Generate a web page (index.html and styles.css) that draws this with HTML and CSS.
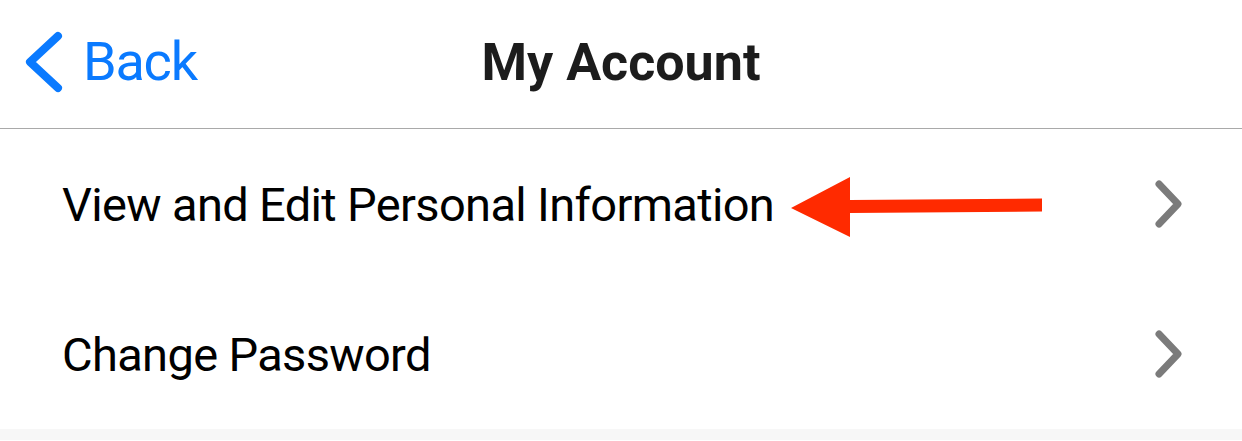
FILE: index.html
```html
<!DOCTYPE html>
<html lang="en">
<head>
    <meta charset="UTF-8">
    <meta name="viewport" content="width=device-width, initial-scale=1.0">
    <title>My Account</title>
    <link rel="stylesheet" href="styles.css">
</head>
<body>
    <div class="nav-bar">
        <a class="back-link" href="#">
            <svg class="back-icon" width="40" height="64" viewBox="0 0 40 64">
                <polyline points="34,6 6,32 34,58" fill="none" stroke="#0a7aff" stroke-width="8" stroke-linecap="round" stroke-linejoin="round"/>
            </svg>
            <span>Back</span>
        </a>
        <h1 class="nav-title">My Account</h1>
    </div>

    <ul class="menu-list">
        <li class="menu-row">
            <span class="row-label">View and Edit Personal Information</span>
            <!-- annotation arrow -->
            <svg class="pointer-arrow" width="256" height="64" viewBox="0 0 256 64">
                <polygon points="3,34 62,3 62,26 254,24.5 254,37.5 62,39 62,63" fill="#ff2a00"/>
            </svg>
            <svg class="chevron" width="34" height="54" viewBox="0 0 34 54">
                <polyline points="7,7 26,27 7,47" fill="none" stroke="#7b7b7b" stroke-width="7" stroke-linecap="round" stroke-linejoin="round"/>
            </svg>
        </li>
        <li class="menu-row">
            <span class="row-label">Change Password</span>
            <svg class="chevron" width="34" height="54" viewBox="0 0 34 54">
                <polyline points="7,7 26,27 7,47" fill="none" stroke="#7b7b7b" stroke-width="7" stroke-linecap="round" stroke-linejoin="round"/>
            </svg>
        </li>
    </ul>
    <div class="footer-band"></div>
</body>
</html>
```

FILE: styles.css
```css
body {
    margin: 0;
    background-color: #ffffff;
    font-family: Roboto, "Noto Sans", sans-serif;
    color: #000;
}

.nav-bar {
    position: relative;
    height: 128px;
    border-bottom: 1px solid #a9a9a9;
    display: flex;
    align-items: center;
    justify-content: center;
}

.back-link {
    position: absolute;
    left: 24px;
    top: 30px;
    display: flex;
    align-items: center;
    gap: 19px;
    color: #0a7aff;
    text-decoration: none;
    font-size: 54px;
    line-height: 64px;
    letter-spacing: -1.2px;
}

.back-icon {
    display: block;
}

.nav-title {
    margin: 0;
    font-size: 52px;
    font-weight: 700;
    color: #1c1c1c;
    line-height: 64px;
    padding-bottom: 2px;
}

.menu-list {
    list-style: none;
    margin: 0;
    padding: 0;
}

.menu-row {
    position: relative;
    height: 150px;
    display: flex;
    align-items: center;
    justify-content: space-between;
    padding: 0 56px 0 62px;
}

.row-label {
    font-size: 47px;
    letter-spacing: -0.65px;
    color: #000;
}

.chevron {
    display: block;
}

.pointer-arrow {
    position: absolute;
    left: 788px;
    top: 45px;
}

.footer-band {
    height: 11px;
    background-color: #f7f7f7;
}
```
